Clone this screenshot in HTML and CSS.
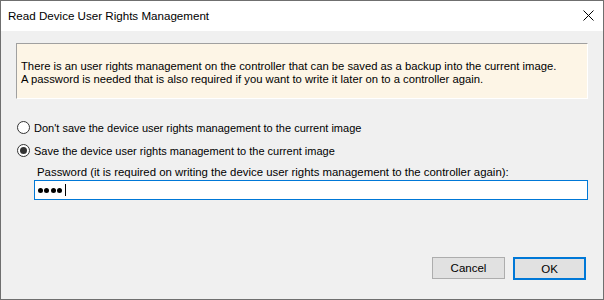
FILE: index.html
```html
<!DOCTYPE html>
<html>
<head>
<meta charset="utf-8">
<link rel="stylesheet" href="styles.css">
</head>
<body>
<div class="window">
  <div class="titlebar">
    <span class="title">Read Device User Rights Management</span>
    <svg class="close" width="11" height="11" viewBox="0 0 11 11"><path d="M0.5 0.5 L10.5 10.5 M10.5 0.5 L0.5 10.5" stroke="#000" stroke-width="1" fill="none"/></svg>
  </div>
  <div class="body">
    <div class="info">
      <p>There is an user rights management on the controller that can be saved as a backup into the current image.<br>A password is needed that is also required if you want to write it later on to a controller again.</p>
    </div>
    <div class="options">
      <label class="radio"><span class="circle"></span><span>Don't save the device user rights management to the current image</span></label>
      <label class="radio"><span class="circle checked"></span><span>Save the device user rights management to the current image</span></label>
      <div class="pw">
        <div class="pw-label">Password (it is required on writing the device user rights management to the controller again):</div>
        <div class="input"><span class="dot"></span><span class="dot"></span><span class="dot"></span><span class="dot"></span><span class="caret"></span></div>
      </div>
    </div>
    <div class="buttons">
      <div class="btn">Cancel</div>
      <div class="btn default">OK</div>
    </div>
  </div>
</div>
</body>
</html>
```
FILE: styles.css
```css
* { box-sizing: border-box; }
html, body { margin: 0; padding: 0; }
body { width: 604px; height: 300px; overflow: hidden; background: #f0f0f0; }
.window {
  width: 604px; height: 300px;
  border: 1px solid #6f6f6f;
  display: flex; flex-direction: column;
  background: #f0f0f0;
}
.titlebar {
  height: 30px; background: #fff;
  display: flex; align-items: center; justify-content: space-between;
  padding: 0 9px 0 7px;
  font-family: "Liberation Sans", Arial, sans-serif; font-size: 11.6px; color: #000;
}
.title { position: relative; top: -1px; }
.close { display: block; position: relative; top: -1px; }
.body { flex: 1; padding: 12px 15px 0 15px; display: flex; flex-direction: column; }
.info {
  height: 56px;
  background: #fdf5e6;
  border-top: 1px solid #a0a0a0; border-left: 1px solid #a0a0a0;
  border-right: 1px solid #fff; border-bottom: 1px solid #fff;
  padding: 16px 0 0 4px;
  font-family: "Liberation Sans", Arial, sans-serif; font-size: 11.25px; line-height: 13px; color: #000;
}
.info p { margin: 0; }
.options { margin-top: 20px; font-family: "Liberation Sans", Arial, sans-serif; font-size: 11px; color: #000; }
.radio { display: flex; align-items: center; height: 17px; margin-bottom: 6px; }
.radio span:last-child { margin-left: 4px; }
.circle {
  width: 13px; height: 13px; border-radius: 50%;
  border: 1px solid #333; background: #fff; margin-left: 1px;
  display: flex; align-items: center; justify-content: center;
}
.circle.checked::after { content: ""; width: 7px; height: 7px; border-radius: 50%; background: #333; }
.pw { padding-left: 18px; }
.pw-label { padding-left: 3px; height: 15px; line-height: 15px; font-size: 11.4px; }
.input {
  height: 20px; background: #fff; border: 1px solid #0078d7;
  display: flex; align-items: center; gap: 1.4px; padding-left: 3px;
}
.dot { width: 5px; height: 5px; border-radius: 50%; background: #000; }
.caret { width: 1px; height: 12px; background: #000; margin-left: 1px; }
.buttons { margin-top: auto; margin-bottom: 19px; display: flex; justify-content: flex-end; gap: 8px; padding-right: 2px; }
.btn {
  width: 73px; height: 22px; background: #e1e1e1; border: 1px solid #adadad;
  display: flex; align-items: center; justify-content: center;
  font-family: "Liberation Sans", Arial, sans-serif; font-size: 11.5px; color: #000;
}
.btn.default { width: 73px; height: 23px; border: 2px solid #0078d7; }
```
